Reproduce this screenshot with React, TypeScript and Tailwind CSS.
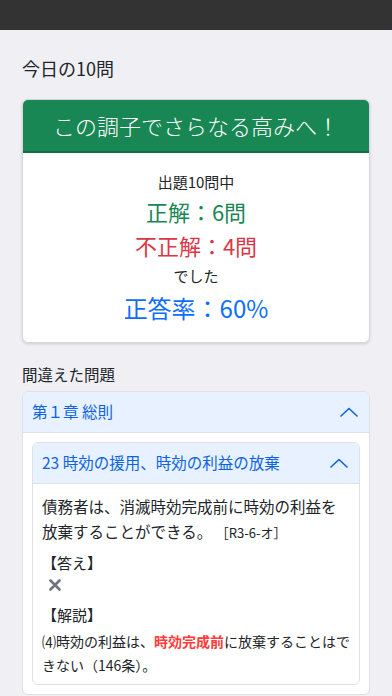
function ChevronUp() {
  return (
    <svg width="18" height="10" viewBox="0 0 18 10" fill="none" className="shrink-0">
      <polyline points="1,9 9,1.5 17,9" stroke="#0c63e4" strokeWidth="1.6" strokeLinecap="round" strokeLinejoin="round" />
    </svg>
  );
}

export default function App() {
  return (
    <div className="min-h-screen bg-[#efeff4] font-['Noto_Sans_CJK_JP','Noto_Sans',sans-serif] text-[#212529]">
      {/* Top bar */}
      <div className="h-[30px] bg-[#333333]" />

      <main className="px-[22px] pt-[26px] pb-4">
        <h1 className="text-[18px] leading-[24px]">今日の10問</h1>

        {/* Result card */}
        <section className="mt-[19px] overflow-hidden rounded-md border border-[#d6d6dc] bg-white shadow-[0_1px_3px_rgba(0,0,0,0.15)]">
          <div className="flex h-[53px] items-center justify-center border-b-2 border-[#146c43] bg-[#198754] text-[22px] font-light text-white">
            この調子でさらなる高みへ！
          </div>
          <div className="flex flex-col items-center pt-[19px] pb-[17px]">
            <p className="text-[15px] leading-[20px]">出題10問中</p>
            <p className="mt-[4px] text-[22px] leading-[30px] text-[#198754]">正解：6問</p>
            <p className="mt-[4px] text-[22px] leading-[30px] text-[#dc3545]">不正解：4問</p>
            <p className="mt-[6px] text-[15px] leading-[20px]">でした</p>
            <p className="mt-[5px] text-[24px] leading-[34px] text-[#0d6efd]">正答率：60%</p>
          </div>
        </section>

        <h2 className="mt-[20px] text-[15.5px] leading-[22px]">間違えた問題</h2>

        {/* Chapter accordion */}
        <section className="mt-[6px] overflow-hidden rounded-md border border-[#dee2e6] bg-white">
          <div className="flex h-[41px] items-center justify-between border-b border-[#dee2e6] bg-[#e7f1ff] pl-[9px] pr-[11px] text-[15.5px] text-[#0c63e4]">
            <span>第１章 総則</span>
            <ChevronUp />
          </div>
          <div className="p-[9px]">
            <div className="overflow-hidden rounded-md border border-[#dee2e6]">
              <div className="flex h-[41px] items-center justify-between border-b border-[#dee2e6] bg-[#e7f1ff] pl-[9px] pr-[11px] text-[15.5px] text-[#0c63e4]">
                <span>23 時効の援用、時効の利益の放棄</span>
                <ChevronUp />
              </div>
              <div className="pl-[9px] pr-[5px] pt-[10px] pb-[7px]">
                <p className="pr-[6px] text-[15.5px] leading-[25px]">
                  債務者は、消滅時効完成前に時効の利益を放棄することができる。{" "}
                  <span className="text-[13px]">［R3-6-オ］</span>
                </p>
                <p className="mt-[6px] text-[15px] leading-[24px]">【答え】</p>
                <div className="flex h-[20px] items-center pl-[7px]">
                  <svg width="12" height="12" viewBox="0 0 12 12">
                    <path d="M1.5 1.5 L10.5 10.5 M10.5 1.5 L1.5 10.5" stroke="#6c757d" strokeWidth="2.6" strokeLinecap="round" />
                  </svg>
                </div>
                <p className="mt-[8px] text-[15px] leading-[24px]">【解説】</p>
                <p className="mt-[2px] text-[14px] leading-[24px]">
                  ⑷時効の利益は、<span className="font-bold text-[#ff3b3b]">時効完成前</span>に放棄することはできない（146条）。
                </p>
              </div>
            </div>
          </div>
        </section>
      </main>
    </div>
  );
}
